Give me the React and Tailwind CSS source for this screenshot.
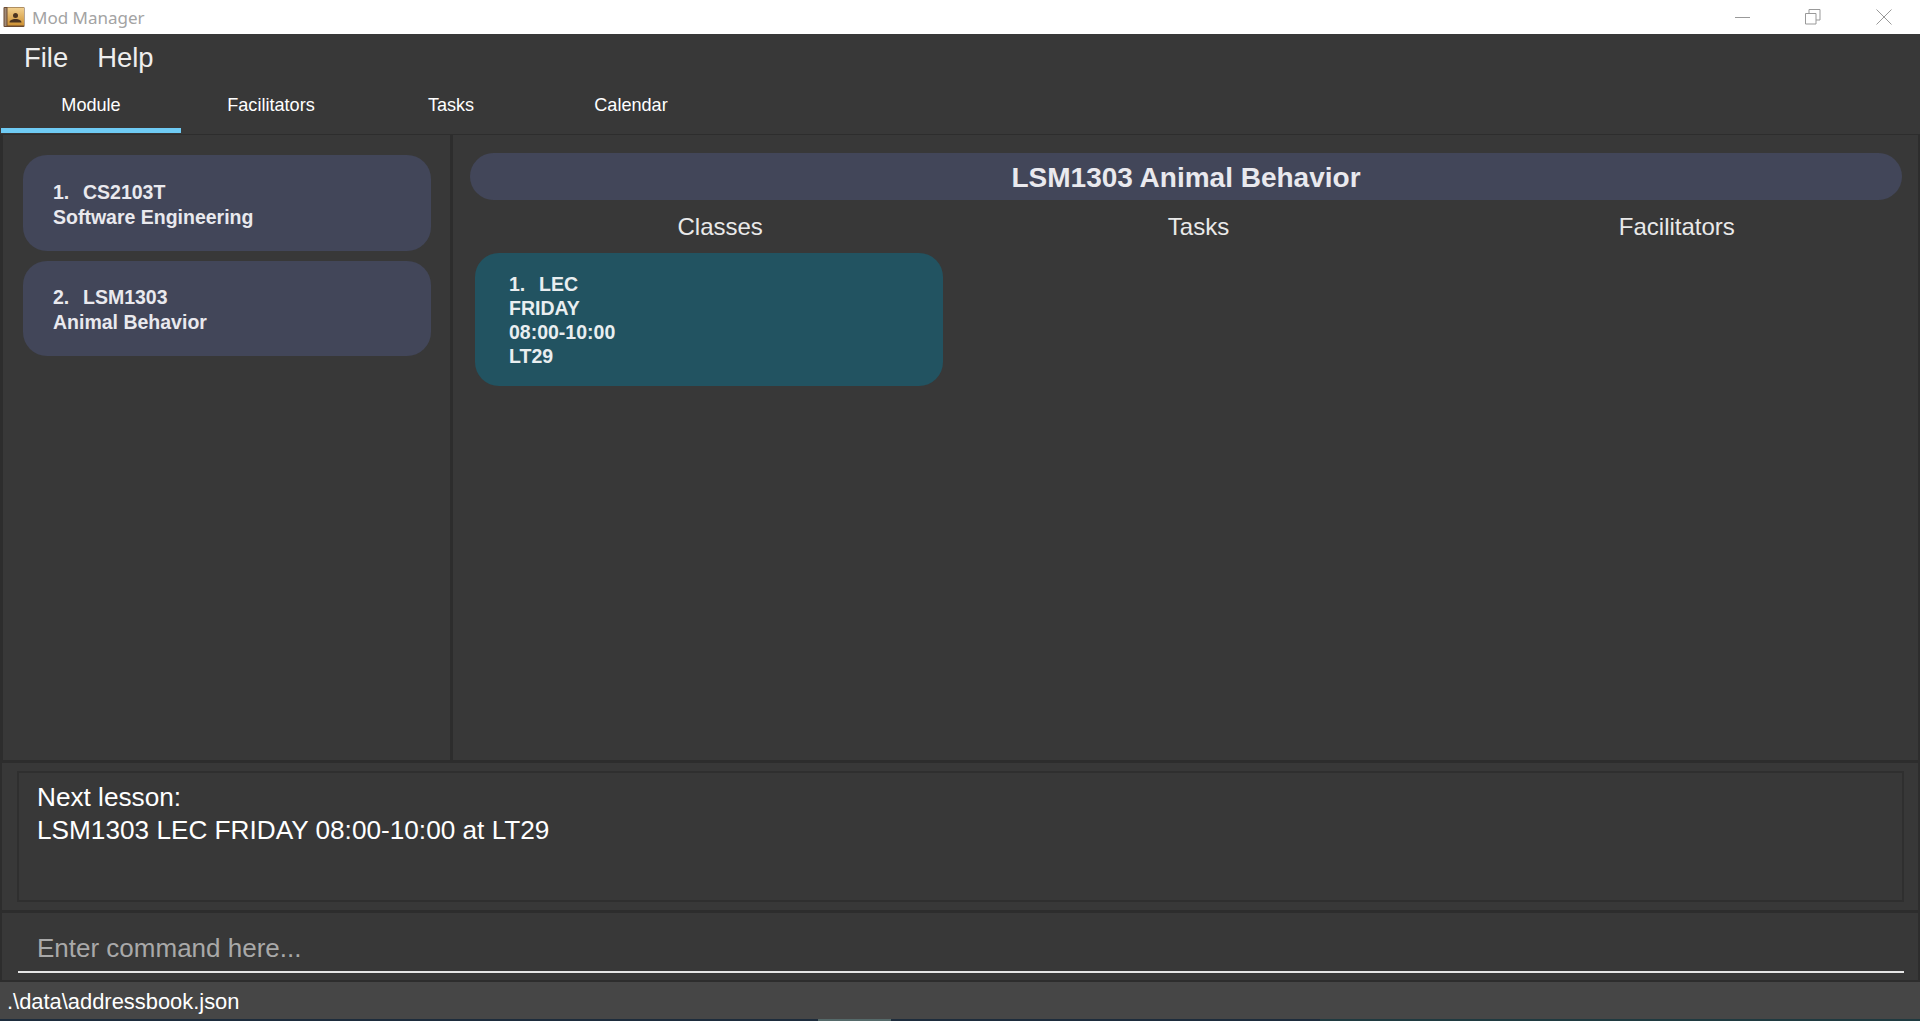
export default function App() {
  const font = "[font-family:'Liberation_Sans',Arial,sans-serif]";
  return (
    <div className={`flex h-[1021px] w-[1920px] flex-col overflow-hidden bg-[#383838] ${font}`}>
      {/* Title bar */}
      <div className="flex h-[34px] shrink-0 items-center bg-white pl-[3px]">
        <svg width="22" height="22" viewBox="0 0 22 22" className="shrink-0">
          <defs>
            <linearGradient id="cover" x1="0" y1="0" x2="0" y2="1">
              <stop offset="0" stopColor="#f2d190" />
              <stop offset="1" stopColor="#cf9233" />
            </linearGradient>
          </defs>
          <rect x="0.5" y="1" width="21" height="20" rx="1" fill="#6b4a30" />
          <rect x="4.500" y="1.500" width="16.500" height="18" fill="url(#cover)" />
          <rect x="1.500" y="2" width="2" height="18" fill="#a08a78" />
          <circle cx="12.500" cy="9.500" r="2.500" fill="#4c3420" />
          <path d="M6.500 16.500c0-2.300 2.500-2.800 4.500-3.500h3c2 .7 4.500 1.200 4.500 3.500z" fill="#4c3420" />
        </svg>
        <span className="ml-[7px] pt-[1px] font-['Noto_Sans',sans-serif] text-[17px] leading-none text-[#a3a3a3]">Mod Manager</span>
        <div className="ml-auto flex items-center text-[#999999]">
          <svg width="16" height="16" viewBox="0 0 16 16" className="mr-[54px]" fill="none" stroke="currentColor"><path d="M0 8.500h15" /></svg>
          <svg width="16" height="16" viewBox="0 0 16 16" className="mr-[55px]" fill="none" stroke="currentColor"><path d="M.5 4.500h10.500v10.500h-10.500z M4 4.500v-4h11v10.500h-4" /></svg>
          <svg width="16" height="16" viewBox="0 0 16 16" className="mr-[28px]" fill="none" stroke="currentColor"><path d="M.5.5l15 15M15.500.5l-15 15" /></svg>
        </div>
      </div>

      {/* Menu */}
      <div className="flex h-[46px] shrink-0 items-center gap-[29px] pl-[24px] pt-[2px] text-[27.400px] text-[#eeeeee]">
        <span>File</span>
        <span>Help</span>
      </div>

      {/* Tabs */}
      <div className="flex h-[55px] shrink-0 border-b border-[#2d2d2d] pl-[1px] text-[18.100px] text-white">
        {["Module", "Facilitators", "Tasks", "Calendar"].map((t, i) => (
          <div key={t} className={`flex h-[53px] w-[180px] items-center justify-center pt-[3px] ${i === 0 ? "border-b-[5px] border-[#6fcbf4]" : "pb-[5px]"}`}>
            {t}
          </div>
        ))}
      </div>

      {/* Main */}
      <div className="flex h-[628px] shrink-0 border-b-[3px] border-[#2d2d2d]">
        <div className="flex w-[453px] shrink-0 flex-col gap-[10px] border-x-[3px] border-[#2d2d2d] pl-[20px] pt-[20px] text-[19.500px] font-bold leading-[25px] text-[#e9e9ee]">
          <div className="flex h-[96px] w-[408px] flex-col justify-center rounded-[24px] bg-[#424659] pl-[30px] pt-[3px]">
            <div className="flex"><span className="w-[30px]">1.</span><span>CS2103T</span></div>
            <div>Software Engineering</div>
          </div>
          <div className="flex h-[95px] w-[408px] flex-col justify-center rounded-[24px] bg-[#424659] pl-[30px] pt-[2px]">
            <div className="flex"><span className="w-[30px]">2.</span><span>LSM1303</span></div>
            <div>Animal Behavior</div>
          </div>
        </div>
        <div className="flex min-w-0 flex-1 flex-col border-r-[2px] border-[#2d2d2d] pt-[18px]">
          <div className="ml-[17px] flex h-[47px] w-[1432px] items-center justify-center rounded-full bg-[#424659] pt-[2px] text-[28px] font-bold text-[#e9e9ee]">
            LSM1303 Animal Behavior
          </div>
          <div className="ml-[28px] mt-[9px] grid h-[30px] w-[1435px] grid-cols-3 items-center text-center text-[24px] text-[#e9e9e9]">
            <div>Classes</div>
            <div>Tasks</div>
            <div>Facilitators</div>
          </div>
          <div className="ml-[22px] mt-[14px] flex h-[133px] w-[468px] flex-col justify-center rounded-[24px] bg-[#225361] pl-[34px] text-[19.500px] font-bold leading-[24px] text-[#e9eef0]">
            <div className="flex"><span className="w-[30px]">1.</span><span>LEC</span></div>
            <div>FRIDAY</div>
            <div>08:00-10:00</div>
            <div>LT29</div>
          </div>
        </div>
      </div>

      {/* Result display */}
      <div className="h-[150px] shrink-0 border-x-[2px] border-b-[3px] border-[#2d2d2d] pl-[15px] pr-[14px] pt-[8px]">
        <div className="h-[131px] border-[2px] border-[#2f2f2f] pl-[18px] pt-[8px] text-[26.200px] leading-[33px] text-white">
          <div>Next lesson:</div>
          <div>LSM1303 LEC FRIDAY 08:00-10:00 at LT29</div>
        </div>
      </div>

      {/* Command box */}
      <div className="h-[69px] shrink-0 border-x-[2px] border-b-[2px] border-[#2d2d2d] pl-[16px] pr-[14px] pt-[12px]">
        <div className="flex h-[48px] items-center border-b-[2px] border-[#e6e6e6] pl-[19px] pt-[1px] text-[26px] text-[#a9a9a9]">
          Enter command here...
        </div>
      </div>

      {/* Status bar */}
      <div className="flex h-[37px] shrink-0 items-center bg-[#464646] pl-[7px] pt-[3px] text-[21.900px] text-white">
        .\data\addressbook.json
      </div>

      {/* Desktop strip */}
      <div className="flex h-[2px] shrink-0 bg-[#1d2c3c]">
        <div className="ml-[818px] w-[73px] bg-[#556a6a]" />
        <div className="ml-auto w-[600px] bg-[#1f3a40]" />
      </div>
    </div>
  );
}
